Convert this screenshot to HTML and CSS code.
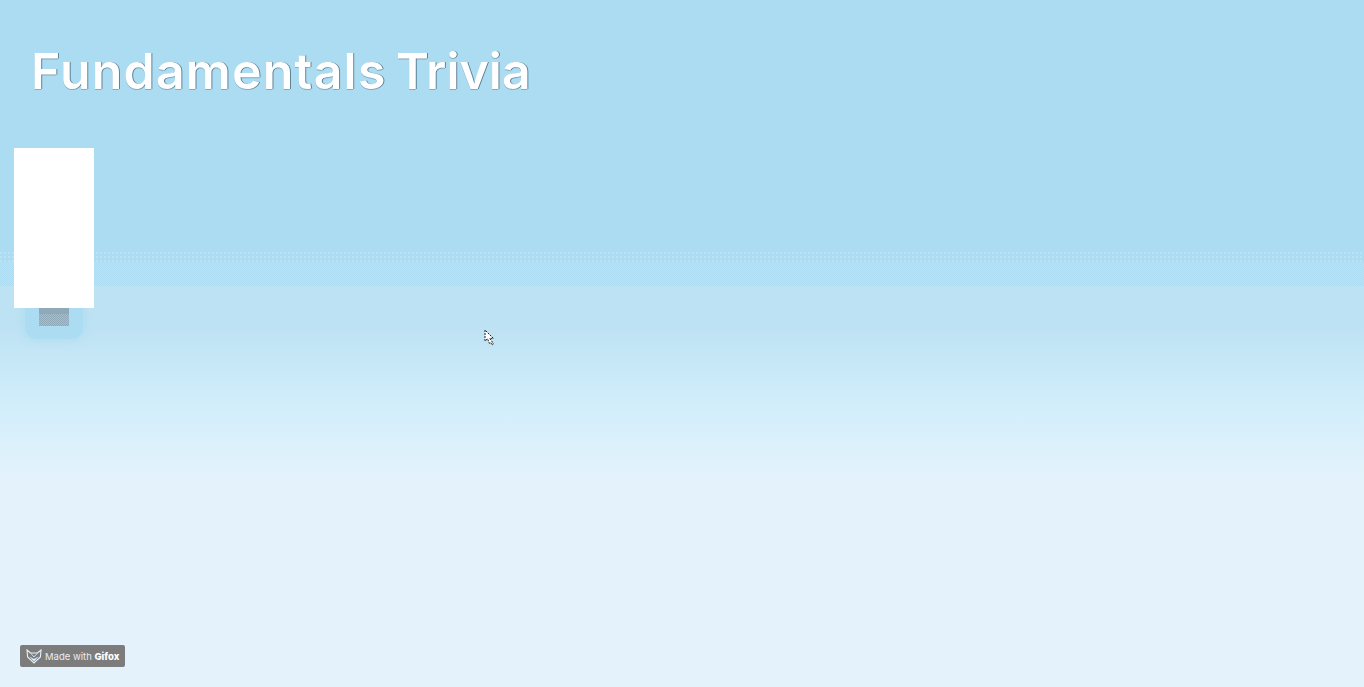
FILE: index.html
```html
<!DOCTYPE html>
<html lang="en">
<head>
    <meta charset="UTF-8">
    <title>Fundamentals Trivia</title>
    <link rel="stylesheet" href="styles.css">
</head>
<body>
    <h1 class="title">Fundamentals <span class="title-end">Trivia</span></h1>
    <div class="card-stack">
        <div class="card"></div>
        <div class="card-glow">
            <div class="card-shadow"></div>
        </div>
    </div>

    <!-- mouse pointer caught in the recording -->
    <svg class="cursor" width="11" height="18" viewBox="0 0 11 18">
        <path d="M1 1V12L3.6 9.8L5.4 14.4L6.8 13.6L8 16L9.4 15L7.4 11.4L5.6 9.4H9.4Z" fill="#fff" stroke="#222" stroke-width="1" stroke-dasharray="2 1"/>
    </svg>

    <div class="gifox-badge">
        <svg class="gifox-logo" width="16" height="15" viewBox="0 0 16 15">
            <path d="M1 1L4.5 4H11.5L15 1L14.4 8L8 14L1.6 8Z" fill="none" stroke="#e4f3fb" stroke-width="1.1"/>
            <path d="M3.4 7.5L8 10L12.6 7.5L8 12.6Z" fill="#e4f3fb"/>
            <path d="M4.5 4L8 8L11.5 4" fill="none" stroke="#bde2f3" stroke-width="1"/>
        </svg>
        <span class="gifox-text">Made with <b>Gifox</b></span>
    </div>
</body>
</html>
```

FILE: styles.css
```css
html, body {
    height: 100%;
}
body {
    margin: 0;
    padding: 0;
    overflow: hidden;
    font-family: Inter, "Liberation Sans", sans-serif;
    background: linear-gradient(to bottom,
        #abdcf2 0,
        #abdcf2 274px,
        #bde2f3 274px,
        #bde2f3 325px,
        #d3eefb 410px,
        #e4f3fb 480px,
        #e4f3fb 100%);
}
/* dithered band where the gif steps between two blues */
body::before {
    content: "";
    position: absolute;
    z-index: -1;
    left: 0;
    right: 0;
    top: 262px;
    height: 24px;
    background: repeating-conic-gradient(#bde2f3 0 25%, #abdcf2 0 50%) 0 0 / 2px 2px;
}
body::after {
    content: "";
    position: absolute;
    z-index: -1;
    left: 0;
    right: 0;
    top: 252px;
    height: 10px;
    background: radial-gradient(circle at 1px 1px, #bde2f3 0.7px, transparent 0.8px) 0 0 / 4px 4px;
}
.title {
    margin: 0;
    padding: 41px 0 0 31px;
    height: 107px;
    box-sizing: border-box;
    font-size: 50px;
    line-height: 60px;
    font-weight: 600;
    letter-spacing: 1.2px;
    word-spacing: -4.5px;
    color: #fff;
    text-shadow: 1px 0 0 rgba(40, 70, 90, 0.6), 0 1px 0 rgba(40, 70, 90, 0.3);
}
.title-end {
    letter-spacing: 0;
}
.card-stack {
    position: relative;
    width: 80px;
    margin: 41px 0 0 14px;
}
.card {
    position: relative;
    height: 160px;
    background-color: #fff;
}
.card-glow {
    width: 58px;
    height: 31px;
    margin-left: 11px;
    background-color: #abdcf2;
    border-radius: 0 0 12px 12px;
    box-shadow: 0 0 6px 3px rgba(171, 220, 242, 0.6);
}
.card-shadow {
    width: 30px;
    height: 18px;
    margin-left: 14px;
    background:
        linear-gradient(#8fa9b8, #8fa9b8) 0 0 / 100% 6px no-repeat,
        repeating-conic-gradient(#8fa9b8 0 25%, #a3c0d0 0 50%) 0 0 / 2px 2px;
}
.cursor {
    position: absolute;
    left: 484px;
    top: 329px;
}
.gifox-badge {
    position: absolute;
    left: 20px;
    top: 645px;
    width: 105px;
    height: 22px;
    box-sizing: border-box;
    padding-left: 6px;
    display: flex;
    align-items: center;
    gap: 3px;
    background-color: #7c7c7c;
    border-radius: 2px;
}
.gifox-text {
    font-family: Inter, sans-serif;
    font-size: 9.5px;
    color: #e8eef2;
    white-space: nowrap;
}
.gifox-text b {
    color: #fff;
    font-weight: 800;
}
```
